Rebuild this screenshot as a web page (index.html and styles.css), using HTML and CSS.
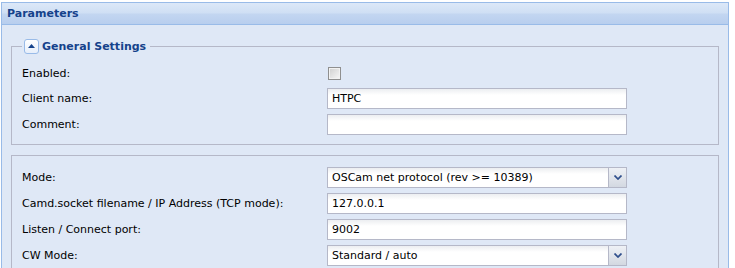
FILE: index.html
```html
<!DOCTYPE html>
<html lang="en">

<head>
    <meta charset="utf-8">
    <title>Parameters</title>
    <link rel="stylesheet" href="styles.css">
</head>

<body>

    <div class="panel">
        <div class="panel-header">Parameters</div>
        <div class="panel-body">

            <fieldset class="group">
                <legend>
                    <span class="toggle">
                        <svg width="7" height="4" viewBox="0 0 7 4"><path d="M0 4 L3.5 0 L7 4 Z" fill="#15428b"/></svg>
                    </span>
                    <span class="legend-text">General Settings</span>
                </legend>

                <div class="row row-check">
                    <label>Enabled:</label>
                    <input type="checkbox" class="check">
                </div>
                <div class="row">
                    <label>Client name:</label>
                    <input type="text" class="field" value="HTPC">
                </div>
                <div class="row">
                    <label>Comment:</label>
                    <input type="text" class="field" value="">
                </div>
            </fieldset>

            <fieldset class="group group-plain">
                <div class="row">
                    <label>Mode:</label>
                    <div class="combo">
                        <input type="text" class="combo-text" value="OSCam net protocol (rev &gt;= 10389)" readonly>
                        <span class="trigger">
                            <svg width="8" height="5" viewBox="0 0 8 5"><path d="M0.5 0.5 L4 4 L7.5 0.5" fill="none" stroke="#2f4f8c" stroke-width="1.7"/></svg>
                        </span>
                    </div>
                </div>
                <div class="row">
                    <label>Camd.socket filename / IP Address (TCP mode):</label>
                    <input type="text" class="field" value="127.0.0.1">
                </div>
                <div class="row">
                    <label>Listen / Connect port:</label>
                    <input type="text" class="field" value="9002">
                </div>
                <div class="row">
                    <label>CW Mode:</label>
                    <div class="combo">
                        <input type="text" class="combo-text" value="Standard / auto" readonly>
                        <span class="trigger">
                            <svg width="8" height="5" viewBox="0 0 8 5"><path d="M0.5 0.5 L4 4 L7.5 0.5" fill="none" stroke="#2f4f8c" stroke-width="1.7"/></svg>
                        </span>
                    </div>
                </div>
            </fieldset>

        </div>
    </div>

</body>

</html>
```

FILE: styles.css
```css
body {
    margin: 0;
    background: #fff;
    font-family: "DejaVu Sans", Tahoma, sans-serif;
    font-size: 11px;
    color: #000;
    overflow: hidden;
}

.panel {
    margin: 2px 6px 0 1px;
    border: 1px solid #99bbe8;
    border-bottom: none;
    height: 300px;
    background: #dfe8f6;
}

.panel-header {
    height: 21px;
    line-height: 21px;
    padding-left: 5px;
    border-bottom: 1px solid #99bbe8;
    background: linear-gradient(#dce8f8 0%, #cfdff4 48%, #c3d6f1 52%, #b8ceee 100%);
    color: #15428b;
    font-weight: bold;
}

.panel-body {
    padding: 13px 9px 0 9px;
}

.group {
    margin: 0;
    padding: 9px 10px 5px 10px;
    border: 1px solid #b5b8c8;
}

.group-plain {
    margin-top: 10px;
    padding-top: 10px;
}

legend {
    padding: 0 4px 0 2px;
    height: 16px;
    display: flex;
    align-items: center;
}

.toggle {
    box-sizing: border-box;
    width: 15px;
    height: 15px;
    margin-right: 3px;
    border: 1px solid #99bbe8;
    border-radius: 3px;
    background: linear-gradient(#ffffff, #e6eefa);
    display: flex;
    align-items: center;
    justify-content: center;
}

.legend-text {
    color: #15428b;
    font-weight: bold;
}

.row {
    display: flex;
    align-items: center;
    height: 22px;
    margin-bottom: 4px;
}

.row-check {
    height: 20px;
}

.row label {
    width: 305px;
}

.check {
    appearance: none;
    box-sizing: border-box;
    width: 13px;
    height: 13px;
    margin: 0 0 0 1px;
    border: 1px solid #8f8f8f;
    box-shadow: inset 0 0 0 1px #f2f2f2;
    background: linear-gradient(135deg, #cfcfcf, #f8f8f8);
}

.field,
.combo {
    box-sizing: border-box;
    width: 300px;
    height: 21px;
    border: 1px solid #b5b8c8;
    background: linear-gradient(#eceef1, #ffffff 6px);
}

.field {
    padding: 0 4px;
    font: inherit;
    color: #000;
    outline: none;
}

.combo {
    display: flex;
}

.combo-text {
    flex: 1;
    min-width: 0;
    border: none;
    padding: 0 4px;
    background: transparent;
    font: inherit;
    color: #000;
    outline: none;
}

.trigger {
    width: 17px;
    border-left: 1px solid #b5b8c8;
    background: linear-gradient(#eef1f6, #d3d8e1);
    display: flex;
    align-items: center;
    justify-content: center;
}
```
